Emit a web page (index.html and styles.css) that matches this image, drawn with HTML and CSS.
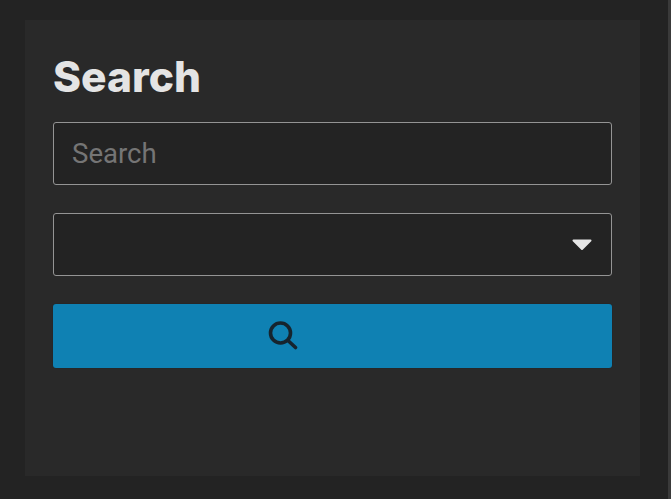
FILE: index.html
```html
<!DOCTYPE html>
<html>
<head>
<meta http-equiv="Content-Type" content="text/html; charset=utf-8">
<title>Search</title>
<link rel="stylesheet" href="styles.css">
</head>
<body>
    <div class="page">
        <form class="search_box">
            <h2>Search</h2>
            <input class="field" type="text" placeholder="Search">
            <div class="field select">
                <svg width="20" height="12" viewBox="0 0 20 12"><path d="M1.500 1.500h17L10 10z" fill="#e6e6e6" stroke="#e6e6e6" stroke-width="2" stroke-linejoin="round"/></svg>
            </div>
            <button class="btn" type="button">
                <svg width="30" height="30" viewBox="0 0 30 30" fill="none" stroke="#16242e" stroke-width="3.600" stroke-linecap="round"><circle cx="12.500" cy="12" r="10"/><path d="M20.500 20l7 6.500"/></svg>
            </button>
        </form>
    </div>
    <div class="scroll_edge"></div>
</body>
</html>
```

FILE: styles.css
```css
*{ margin: 0; padding: 0; box-sizing: border-box;}
html, body{ height: 100%; overflow: hidden;}
body{ display: flex; background: #232323; font-family: "Roboto", sans-serif;}

.page{ flex: 1; padding: 20px 28px 23px 25px;}
.scroll_edge{ width: 3px; background: #3a3a3a;}

.search_box{ display: flex; flex-direction: column; height: 100%; padding: 32px 28px 0; background: #292929;}
.search_box h2{ height: 70px; font: 850 42.5px/50px "Inter", sans-serif; color: #e4e4e4;}

.field{ display: block; width: 100%; height: 63px; background: #232323; border: 1px solid #949494; border-radius: 3px;}
input.field{ padding: 0 18px; font: 400 27.6px "Roboto", sans-serif; color: #e6e6e6; outline: none;}
input.field::placeholder{ color: #757575; opacity: 1;}

.select{ display: flex; align-items: center; justify-content: flex-end; margin-top: 28px; padding-right: 19px;}

.btn{ display: flex; align-items: center; height: 64px; margin-top: 28px; padding-left: 215px; background: #0f81b3; border: 0; border-radius: 3px; box-shadow: 0 0 1px #16242e;}
```
